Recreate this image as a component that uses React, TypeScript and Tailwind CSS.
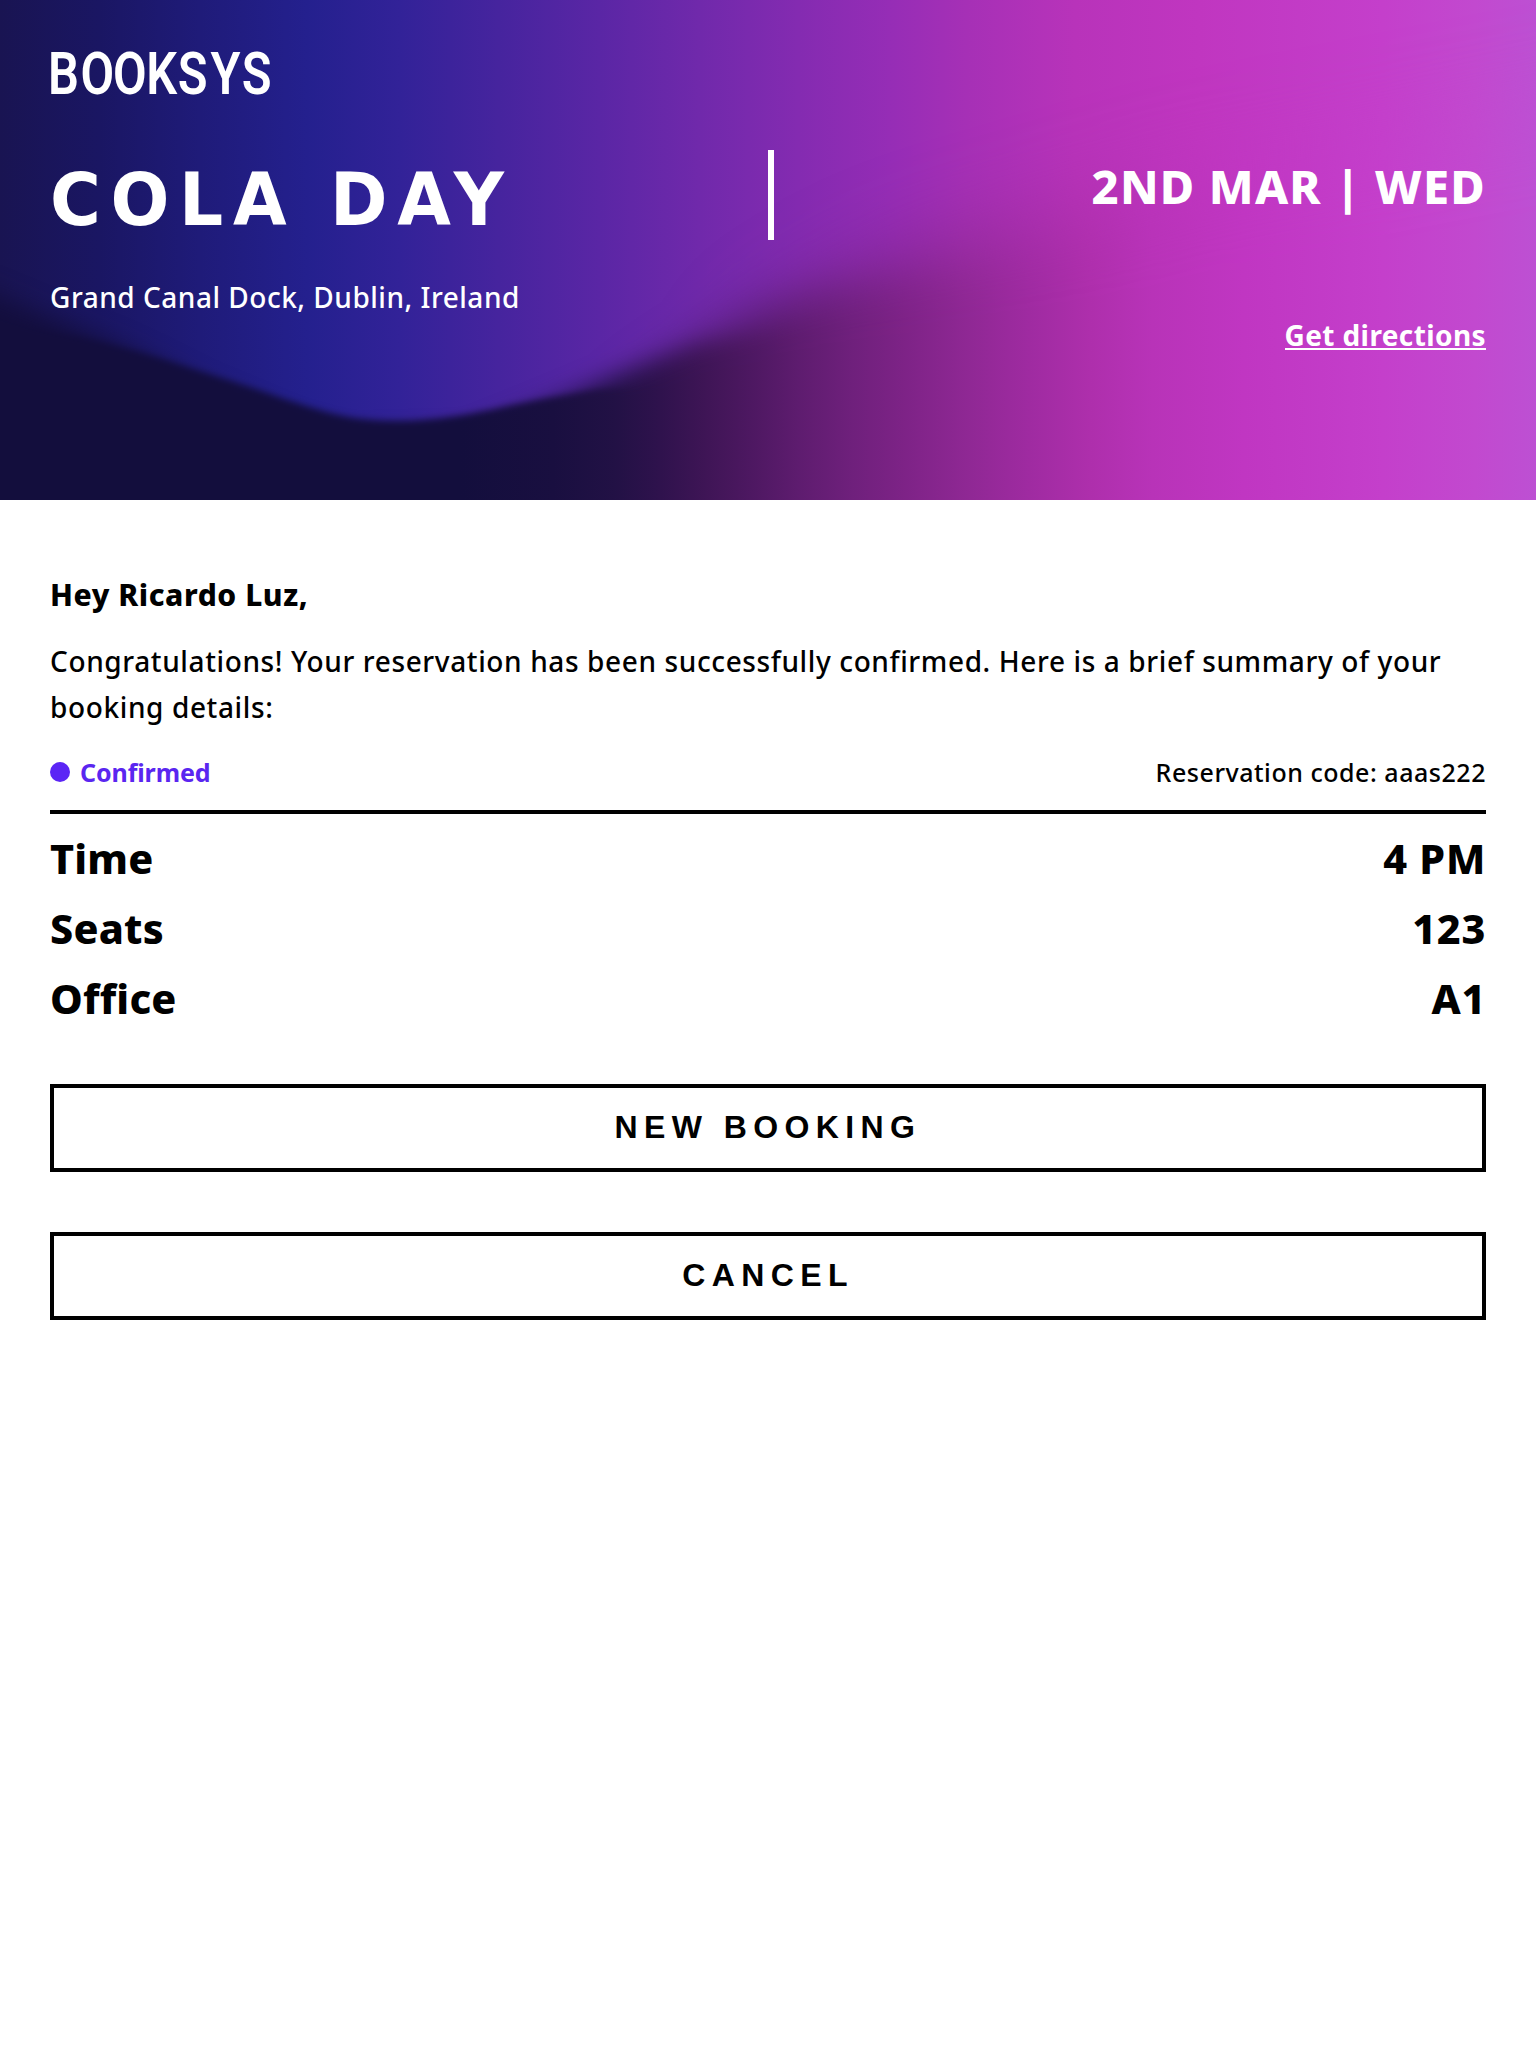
import type { ReactNode } from "react";

function HeroBackground() {
  return (
    <svg
      className="absolute inset-0 h-full w-full"
      viewBox="0 0 1536 500"
      preserveAspectRatio="none"
      aria-hidden="true"
    >
      <defs>
        <linearGradient id="glow" gradientUnits="userSpaceOnUse" x1="0" y1="0" x2="1536" y2="0">
          <stop offset="0" stopColor="#191452" />
          <stop offset="0.065" stopColor="#1a1663" />
          <stop offset="0.13" stopColor="#1f1b79" />
          <stop offset="0.2" stopColor="#24208e" />
          <stop offset="0.26" stopColor="#322298" />
          <stop offset="0.325" stopColor="#46249e" />
          <stop offset="0.39" stopColor="#5a26a5" />
          <stop offset="0.455" stopColor="#7029ab" />
          <stop offset="0.52" stopColor="#842bb1" />
          <stop offset="0.58" stopColor="#962db6" />
          <stop offset="0.63" stopColor="#a630b6" />
          <stop offset="0.7" stopColor="#b833ba" />
          <stop offset="0.78" stopColor="#c036c0" />
          <stop offset="0.9" stopColor="#c43fcb" />
          <stop offset="0.96" stopColor="#c249cf" />
          <stop offset="1" stopColor="#bd50d3" />
        </linearGradient>
        <linearGradient id="shade" gradientUnits="userSpaceOnUse" x1="0" y1="0" x2="1536" y2="0">
          <stop offset="0" stopColor="#130e3d" />
          <stop offset="0.3" stopColor="#130e3d" />
          <stop offset="0.36" stopColor="#190f40" />
          <stop offset="0.4" stopColor="#221145" />
          <stop offset="0.43" stopColor="#2f124d" />
          <stop offset="0.46" stopColor="#3f1556" />
          <stop offset="0.49" stopColor="#4e1862" />
          <stop offset="0.52" stopColor="#5e1c6f" />
          <stop offset="0.555" stopColor="#6f207c" />
          <stop offset="0.59" stopColor="#7e2387" />
          <stop offset="0.63" stopColor="#8f2894" />
          <stop offset="0.67" stopColor="#9f2ba1" />
          <stop offset="0.71" stopColor="#ae2fac" />
          <stop offset="0.75" stopColor="#b833b8" />
          <stop offset="0.81" stopColor="#c036c2" />
          <stop offset="0.9" stopColor="#c43fcb" />
          <stop offset="0.96" stopColor="#c249cf" />
          <stop offset="1" stopColor="#bd50d3" />
        </linearGradient>
        <filter id="soft1" filterUnits="userSpaceOnUse" x="-300" y="-200" width="2236" height="1200">
          <feGaussianBlur stdDeviation="3.5" />
        </filter>
        <filter id="soft2" filterUnits="userSpaceOnUse" x="-300" y="-200" width="2236" height="1200">
          <feGaussianBlur stdDeviation="12" />
        </filter>
        <filter id="soft3" filterUnits="userSpaceOnUse" x="-300" y="-200" width="2236" height="1200">
          <feGaussianBlur stdDeviation="25" />
        </filter>
        <filter id="soft4" filterUnits="userSpaceOnUse" x="-300" y="-200" width="2236" height="1200">
          <feGaussianBlur stdDeviation="44" />
        </filter>
        <mask id="wave" maskUnits="userSpaceOnUse" x="0" y="0" width="1536" height="500">
          <path
            filter="url(#soft1)"
            fill="#fff"
            d="M-100 330 L0 325 L80 338 C120 347 145 354 171 362 C205 373 235 382 264 392 C295 403 320 411 343 416 C368 421 388 421 406 421 C435 420 465 415 490 410 C530 401 560 396 600 390 L660 390 L760 410 L1600 450 V700 H-100 Z"
          />
          <path
            filter="url(#soft2)"
            fill="#fff"
            d="M-100 258 L0 297 L88 334 C130 350 160 366 200 386 L330 440 L470 436 L540 408 L588 388 C625 372 660 360 700 346 L800 336 L1600 340 V700 H-100 Z"
          />
          <path
            filter="url(#soft3)"
            fill="#fff"
            d="M590 500 L620 412 C665 372 700 352 740 330 C780 309 810 300 860 294 L980 290 L1700 280 V900 H590 Z"
          />
          <path
            filter="url(#soft4)"
            fill="#fff"
            d="M720 420 L770 340 C830 296 890 264 960 244 C1050 218 1100 202 1200 176 L1800 60 V900 H720 Z"
          />
        </mask>
      </defs>
      <rect width="1536" height="500" fill="url(#glow)" />
      <rect width="1536" height="500" fill="url(#shade)" mask="url(#wave)" />
    </svg>
  );
}

function Logo() {
  return (
    <svg className="block h-[60px] w-[230px] overflow-visible" role="img" aria-label="Booksys">
      <text
        transform="scale(0.82 1)"
        x="-2.4 37.2 76.8 117.4 155.9 195.7 233.8"
        y="51.7"
        fill="#fff"
        className="font-['Roboto'] text-[59.5px] font-semibold"
      >
        BOOKSYS
      </text>
    </svg>
  );
}

function DetailRow({ label, children }: { label: string; children: ReactNode }) {
  return (
    <div className="flex h-[70px] items-center justify-between text-[41.3px] font-extrabold tracking-[0.2px]">
      <dt>{label}</dt>
      <dd className="tracking-[0.7px]">{children}</dd>
    </div>
  );
}

function OutlineButton({ children }: { children: ReactNode }) {
  return (
    <button className="flex h-[88px] w-full items-center justify-center border-4 border-black pb-0.5 font-['Liberation_Sans',sans-serif] text-[32px] font-bold tracking-[6.4px]">
      {children}
    </button>
  );
}

export default function App() {
  return (
    <div className="min-h-[2048px] bg-white font-['Noto_Sans',sans-serif] text-black">
      <header className="relative h-[500px] text-white">
        <HeroBackground />
        <div className="relative px-[50px] pt-[42px]">
          <Logo />
          <div className="flex pt-12">
            <div className="w-[718px]">
              <h1 className="origin-left scale-x-[0.94] pt-[5px] font-['DejaVu_Sans',sans-serif] text-[73.7px] leading-[90px] font-bold tracking-[10.3px] whitespace-nowrap">
                COLA DAY
              </h1>
              <p className="pt-8 text-[28px] leading-[40px] font-medium tracking-[0.52px]">
                Grand Canal Dock, Dublin, Ireland
              </p>
            </div>
            <div className="h-[90px] w-1.5 bg-white" />
            <div className="flex flex-1 flex-col items-end">
              <p className="pt-1.5 text-[47px] leading-[60px] font-extrabold tracking-[1.2px]">2ND MAR | WED</p>
              <a
                href="#directions"
                className="mt-[107px] border-b-2 border-white text-[28px] leading-[25px] font-bold tracking-[0.4px]"
              >
                Get directions
              </a>
            </div>
          </div>
        </div>
      </header>

      <main className="px-[50px] pt-[74px]">
        <h2 className="text-[30px] leading-[42px] font-extrabold tracking-[0.57px]">Hey Ricardo Luz,</h2>
        <p className="pt-[22px] text-[28px] leading-[46px] font-medium tracking-[0.62px]">
          Congratulations! Your reservation has been successfully confirmed. Here is a brief summary of your
          booking details:
        </p>
        <div className="mt-[22px] flex h-[62px] items-start justify-between border-b-4 border-black text-[25px] leading-[40px]">
          <div className="flex items-center gap-2.5 font-bold tracking-[-0.1px] text-[#5a26f0]">
            <span className="size-5 rounded-full bg-[#5b25f5]" />
            Confirmed
          </div>
          <p className="font-medium tracking-[0.53px]">Reservation code: aaas222</p>
        </div>
        <dl className="pt-2.5">
          <DetailRow label="Time">4 PM</DetailRow>
          <DetailRow label="Seats">123</DetailRow>
          <DetailRow label="Office">A1</DetailRow>
        </dl>
        <div className="flex flex-col gap-[60px] pt-[50px]">
          <OutlineButton>NEW BOOKING</OutlineButton>
          <OutlineButton>CANCEL</OutlineButton>
        </div>
      </main>
    </div>
  );
}
